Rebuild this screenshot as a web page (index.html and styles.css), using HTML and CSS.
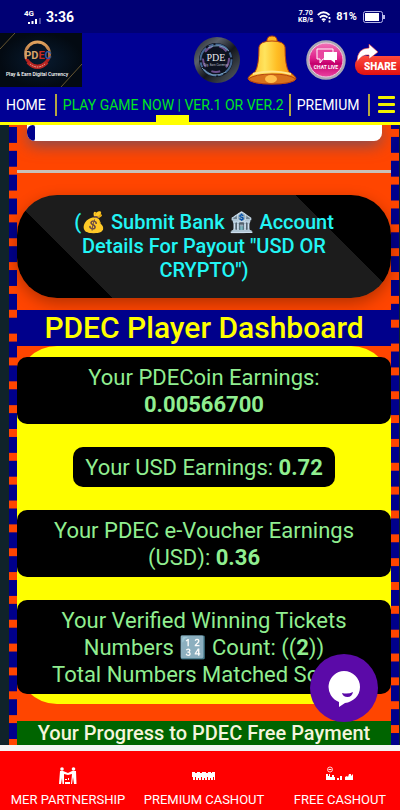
FILE: index.html
```html
<!DOCTYPE html>
<html lang="en">
<head>
    <meta charset="UTF-8">
    <meta name="viewport" content="width=device-width, initial-scale=1.0">
    <title>PDEC Player Dashboard</title>
    <link rel="stylesheet" href="styles.css">
</head>
<body>
    <div class="status-bar">
        <div class="status-left">
            <div class="signal">
                <span>4G</span>
                <svg width="14" height="6" viewBox="0 0 14 6"><path d="M0 4h2v2H0zM3.500 3h2v3h-2zM7 1h2v5H7z" fill="#fff"/><path d="M11 0h2v6h-2z" fill="#4a4aa0"/></svg>
            </div>
            <span class="clock">3:36</span>
        </div>
        <div class="status-right">
            <span class="speed">7.70<br>KB/s</span>
            <svg width="15" height="12" viewBox="0 0 15 12" fill="none" stroke="#fff" stroke-width="1.800">
                <path d="M.8 4Q6.500-1.500 12.500 4M2.800 6.500Q6.500 3 10.500 6.500M5 9Q6.500 7.500 8.500 9"/>
                <circle cx="6.700" cy="10.300" r=".8" fill="#fff" stroke="none"/>
                <path d="M12.500 6v2M12.500 9.500v2"/>
            </svg>
            <span class="percent">81%</span>
            <svg width="22" height="12" viewBox="0 0 22 12"><rect x=".5" y=".5" width="19" height="11" rx="2" fill="none" stroke="#b8b8e8"/><path d="M2 2h14v8H2z" fill="#fff"/><path d="M20 4h2v4h-2z" fill="#b8b8e8"/></svg>
        </div>
    </div>

    <header>
        <div class="brand-row">
            <a href="#" class="logo" aria-label="PDEC">
                <svg width="82" height="54" viewBox="0 0 82 54">
                    <defs>
                        <linearGradient id="gold" x1="0" y1="0" x2="0" y2="1"><stop offset="0" stop-color="#e0a25e"/><stop offset=".6" stop-color="#a8663a"/><stop offset=".7" stop-color="#c32422"/><stop offset="1" stop-color="#7c1515"/></linearGradient>
                        <radialGradient id="night"><stop offset="0" stop-color="#081b30"/><stop offset="1" stop-color="#030a12"/></radialGradient>
                    </defs>
                    <rect width="82" height="54" fill="url(#night)"/>
                    <path d="M0 16L15 0M61 54L82 31" stroke="#806a38" stroke-width=".8"/>
                    <circle cx="37.500" cy="21" r="12" fill="none" stroke="url(#gold)" stroke-width="3"/>
                    <path d="M28 29Q37.500 39 47 29" fill="none" stroke="#b92724" stroke-width="4"/>
                    <path d="M30 31Q37.500 37 45 31" fill="none" stroke="#e8b0a0" stroke-dasharray="1.500 1"/>
                    <rect x="27" y="17" width="21" height="9" fill="#071322"/>
                    <text x="38" y="26" font-size="11" font-weight="700" fill="#d7a469" text-anchor="middle">PD<tspan fill="#c92a20">E</tspan><tspan fill="#3457a4">C</tspan></text>
                    <text x="37" y="43" font-size="5" font-weight="500" fill="#fff" text-anchor="middle">Play &amp; Earn Digital Currency</text>
                </svg>
            </a>
            <div class="top-icons">
                <a href="#" aria-label="PDE coin">
                    <svg width="46" height="46" viewBox="0 0 46 46">
                        <defs><linearGradient id="steel" x1="0" x2="1" y1="0" y2="1"><stop offset="0" stop-color="#1b2028"/><stop offset=".3" stop-color="#5b616b"/><stop offset=".55" stop-color="#14171d"/><stop offset="1" stop-color="#5d6670"/></linearGradient></defs>
                        <circle cx="23" cy="23" r="23" fill="url(#steel)"/>
                        <circle cx="22" cy="23" r="17" fill="#0d1220"/>
                        <g fill="none" stroke-width="2">
                            <circle cx="22" cy="23" r="15.500" stroke="#456892" stroke-dasharray="14 3 5 2"/>
                            <circle cx="22" cy="22" r="13" stroke="#6c4f8c" stroke-dasharray="9 7"/>
                            <path d="M8 31Q18 43 32 35M35 14Q26 5 14 11" stroke="#7aa2c0" stroke-width="1"/>
                        </g>
                        <text class="serif" x="22" y="24" font-size="10" fill="#e8e8ee" text-anchor="middle">PDE</text>
                        <text x="22" y="29" font-size="3" fill="#b8bcc8" text-anchor="middle">Dig. Earn Currency</text>
                    </svg>
                </a>
                <a href="#" aria-label="Notifications">
                    <svg width="50" height="50" viewBox="0 0 50 50">
                        <defs><linearGradient id="bell" x1="0" x2="1"><stop offset="0" stop-color="#ffb31a"/><stop offset=".35" stop-color="#ffe45e"/><stop offset=".6" stop-color="#ffbe24"/><stop offset="1" stop-color="#f08712"/></linearGradient></defs>
                        <g stroke="#b4420f" stroke-width="1">
                            <path d="M20 8Q19 1 25 1T30 8z" fill="#ffb41e"/>
                            <path d="M12 12Q13 6 25 6T38 12Q38 31 42 37Q49 41 49 44Q45 49 25 49T1 44Q1 41 8 37Q12 31 12 12z" fill="url(#bell)"/>
                            <path d="M1 44Q8 39 25 39T49 44Q45 49 25 49T1 44z" fill="#d8731c"/>
                        </g>
                        <ellipse cx="24" cy="44" rx="6" ry="4" fill="#ffbf4b"/>
                        <path d="M6 39Q25 34 44 39" stroke="#ffe68a" stroke-width="2" fill="none"/>
                    </svg>
                </a>
                <a href="#" class="chat-live" aria-label="Chat live">
                    <svg width="40" height="40" viewBox="0 0 40 40">
                        <defs><linearGradient id="pink" x1="0" x2="0" y1="0" y2="1"><stop offset="0" stop-color="#f27bbb"/><stop offset=".45" stop-color="#e0218a"/><stop offset=".6" stop-color="#c4006c"/><stop offset="1" stop-color="#f04aa8"/></linearGradient></defs>
                        <circle cx="20" cy="20" r="18.500" fill="url(#pink)" stroke="#a9a9b4" stroke-width="2.500"/>
                        <circle cx="20" cy="20" r="17" fill="none" stroke="#e9d3e2"/>
                        <path d="M11 9h16v10H17l-3 4v-4h-3z" fill="#e8479f" stroke="#fff"/>
                        <path d="M18 12h13v8h-2v3l-4-3h-7z" fill="#fff"/>
                        <text x="20" y="29" font-size="5" font-weight="700" fill="#fff" text-anchor="middle">CHAT LIVE</text>
                    </svg>
                </a>
                <a href="#" class="share" aria-label="Share">
                    <svg width="52" height="32" viewBox="0 0 52 32">
                        <defs><linearGradient id="red" x1="0" x2="0" y1="0" y2="1"><stop offset="0" stop-color="#ff4a3c"/><stop offset="1" stop-color="#e01010"/></linearGradient></defs>
                        <rect x="0" y="12" width="60" height="19" rx="9" fill="url(#red)"/>
                        <path d="M2 18Q2 4 14 4V0l9 8-9 7v-4Q7 10 2 18z" fill="#fff" stroke="#d33" stroke-width=".6"/>
                        <text x="9" y="26" font-size="10" font-weight="900" fill="#fff">SHARE</text>
                    </svg>
                </a>
            </div>
        </div>
        <nav class="main-nav">
            <a href="#">HOME</a>
            <a href="#" class="active">PLAY GAME NOW | VER.1 OR VER.2</a>
            <a href="#">PREMIUM</a>
            <button type="button" class="menu" aria-label="Menu"><span></span><span></span><span></span></button>
        </nav>
    </header>

    <main>
        <div class="panel">
            <div class="progress"><div class="progress-fill"></div></div>
            <hr>
            <button type="button" class="bank-btn">(💰 Submit Bank 🏦 Account Details For Payout "USD OR CRYPTO")</button>
            <h1>PDEC Player Dashboard</h1>
            <section class="earnings">
                <p>Your PDECoin Earnings: <b>0.00566700</b></p>
                <p class="fit">Your USD Earnings: <b>0.72</b></p>
                <p>Your PDEC e-Voucher Earnings (USD): <b>0.36</b></p>
                <p>Your Verified Winning Tickets Numbers 🔢 Count: ((<b>2</b>))<br>Total Numbers Matched So Far</p>
            </section>
            <h2>Your Progress to PDEC Free Payment</h2>
        </div>
        <button type="button" class="chat" aria-label="Open chat">
            <svg width="34" height="40" viewBox="0 0 34 40">
                <path d="M17 3a16 16 0 0 1 16 16c0 9-7 15-15 16l-6 4v-5A16 16 0 0 1 17 3z" fill="#fff"/>
                <path d="M15 25q6 1.500 11-1q-1 5-5.500 5T15 25z" fill="#5b0aa8"/>
            </svg>
        </button>
    </main>

    <footer>
        <a href="#">
            <svg width="20" height="20" viewBox="0 0 20 20" fill="#fff">
                <circle cx="4" cy="3" r="1.800"/><circle cx="15.500" cy="3" r="1.800"/>
                <path d="M2 5h3l5 2 4-2h4l.5 13H16l-1-7-1 7h-1l1-10-4 1-4-1v10H4.500L4 12l-1 6H1z"/>
                <path d="M7 13h2v1H7zM10 12h1v2h-1zM7 16h5v2H7z"/>
            </svg>
            <span>MER PARTNERSHIP</span>
        </a>
        <a href="#">
            <svg width="26" height="20" viewBox="0 0 26 20" fill="#fff">
                <path d="M1 6h3v1h2V6h3v1h2V6h4v1h2V6h3v1h1V6h3v8h-1v-3h-1v3h-2v-2h-1v2h-2v-3h-1v3h-2v-2h-1v2h-2v-3h-1v3H8v-2H7v2H5v-3H4v3H2v-3H1z"/>
            </svg>
            <span>PREMIUM CASHOUT</span>
        </a>
        <a href="#">
            <svg width="28" height="20" viewBox="0 0 28 20" fill="#fff">
                <circle cx="4" cy="3.500" r="2.500" fill="none" stroke="#fff" stroke-width=".8"/><path d="M2.500 3h3v1h-3z"/>
                <path d="M0 8h2v2h1V8h1v3h2V9h2v2h1v3H0zM11 12h2v2h-2zM14 10h2v4h-2zM19 11l2-1 1 1 1-3h2v2l2-2v6h-8z"/>
            </svg>
            <span>FREE CASHOUT</span>
        </a>
    </footer>
</body>
</html>
```

FILE: styles.css
```css
* {
    box-sizing: border-box;
}
body {
    margin: 0;
    height: 100vh;
    display: flex;
    flex-direction: column;
    overflow: hidden;
    font-family: Roboto, "Noto Color Emoji", sans-serif;
    background: #10232a;
}
a {
    color: white;
    text-decoration: none;
}
button {
    font-family: inherit;
    border: none;
    padding: 0;
    cursor: pointer;
}
svg {
    display: block;
}
.serif {
    font-family: "Liberation Serif", serif;
}

/* phone status bar */
.status-bar {
    display: flex;
    justify-content: space-between;
    align-items: center;
    height: 33px;
    padding: 0 15px 0 24px;
    background: #000074;
    color: white;
}
.status-left, .status-right {
    display: flex;
    align-items: center;
    gap: 4px;
}
.signal {
    font-size: 8px;
    line-height: 8px;
    font-weight: bold;
}
.signal svg {
    margin-left: 4px;
}
.clock {
    font-size: 14px;
    font-weight: bold;
}
.speed {
    font-size: 7px;
    line-height: 7px;
    font-weight: bold;
    text-align: center;
}
.percent {
    font-size: 11px;
    font-weight: bold;
    margin-right: 2px;
}

/* header */
header {
    background: #000094;
    border-bottom: 3px solid yellow;
}
.brand-row {
    display: flex;
    justify-content: space-between;
    overflow: hidden;
}
.top-icons {
    display: flex;
    align-items: center;
    gap: 7px;
}
.chat-live {
    margin: 0 2px;
}
.share {
    margin-right: -7px;
}
.main-nav {
    display: flex;
    align-items: center;
    height: 35px;
    padding: 0 5px 0 6px;
    font-size: 14px;
    line-height: 22px;
    white-space: nowrap;
    background: linear-gradient(yellow, yellow) 156px 100% / 33px 7px no-repeat;
}
.main-nav a {
    padding-right: 9px;
    margin-right: 6px;
    border-right: 2px solid #b5a642;
}
.main-nav .active {
    color: #00e51f;
    padding-right: 5px;
}
.menu {
    display: flex;
    flex-direction: column;
    gap: 4px;
    width: 17px;
    margin-left: auto;
    background: none;
}
.menu span {
    height: 3px;
    border-radius: 1px;
    background: #f2f200;
}

/* dashboard */
main {
    position: relative;
    flex: 1;
    min-height: 0;
    overflow: hidden;
    padding: 0 1px 0 9px;
    border-bottom: 6px solid #f4f4f4;
}
.panel {
    height: 100%;
    padding: 0 8px;
    overflow: hidden;
    background:
        linear-gradient(orangered 2px, darkblue 2px 18px, orangered 18px) 0 0 / 8px 24px no-repeat,
        linear-gradient(darkblue 4px, orangered 4px 12px, darkblue 12px) 100% 0 / 8px 24px no-repeat,
        orangered;
    background-repeat: no-repeat round, no-repeat round, repeat;
}
.progress {
    height: 16px;
    margin: 0 9px 29px 10px;
    border-radius: 0 0 8px 8px;
    background: white;
    overflow: hidden;
    box-shadow: 0 4px 16px rgba(80, 80, 120, 0.8);
}
.progress-fill {
    width: 8px;
    height: 16px;
    border-radius: 8px 3px 3px 8px;
    background: #00008b;
}
hr {
    height: 3px;
    margin: 0 0 22px;
    border: none;
    background: #c9c0b8;
}
.bank-btn {
    display: block;
    width: 100%;
    padding: 15px 44px 16px;
    border-radius: 40px;
    background: linear-gradient(45deg, black 20%, #1c1c1c 20% 80%, black 80%);
    box-shadow: 0 5px 15px rgba(0, 0, 0, 0.3);
    color: #22f5f5;
    font-size: 20px;
    font-weight: 500;
    line-height: 24px;
}
h1 {
    margin: 12px 0 0;
    background: #00008b;
    color: yellow;
    font-size: 30px;
    font-weight: 500;
    line-height: 36px;
    text-align: center;
}
.earnings {
    display: flex;
    flex-direction: column;
    align-items: center;
    gap: 23px;
    padding: 11px 0 10px;
    border-radius: 40px;
    background: yellow;
}
.earnings p {
    width: 100%;
    margin: 0;
    padding: 7px 24px 6px;
    border-radius: 10px;
    background: black;
    color: lightgreen;
    font-size: 22px;
    line-height: 27px;
    text-align: center;
}
.earnings .fit {
    width: auto;
    padding: 7px 12px 6px;
}
h2 {
    margin: 17px 0 0;
    background: #006400;
    color: #f5f5dc;
    font-size: 20px;
    font-weight: 500;
    line-height: 24px;
    text-align: center;
}
.chat {
    position: absolute;
    right: 22px;
    bottom: 23px;
    display: flex;
    align-items: center;
    justify-content: center;
    width: 68px;
    height: 68px;
    border-radius: 50%;
    background: #5b0aa8;
}

/* bottom links */
footer {
    display: grid;
    grid-template-columns: repeat(3, 34%);
    padding: 15px 0 2px;
    background: red;
    font-size: 13px;
    line-height: 16px;
}
footer a {
    display: flex;
    flex-direction: column;
    align-items: center;
    gap: 6px;
}
```
